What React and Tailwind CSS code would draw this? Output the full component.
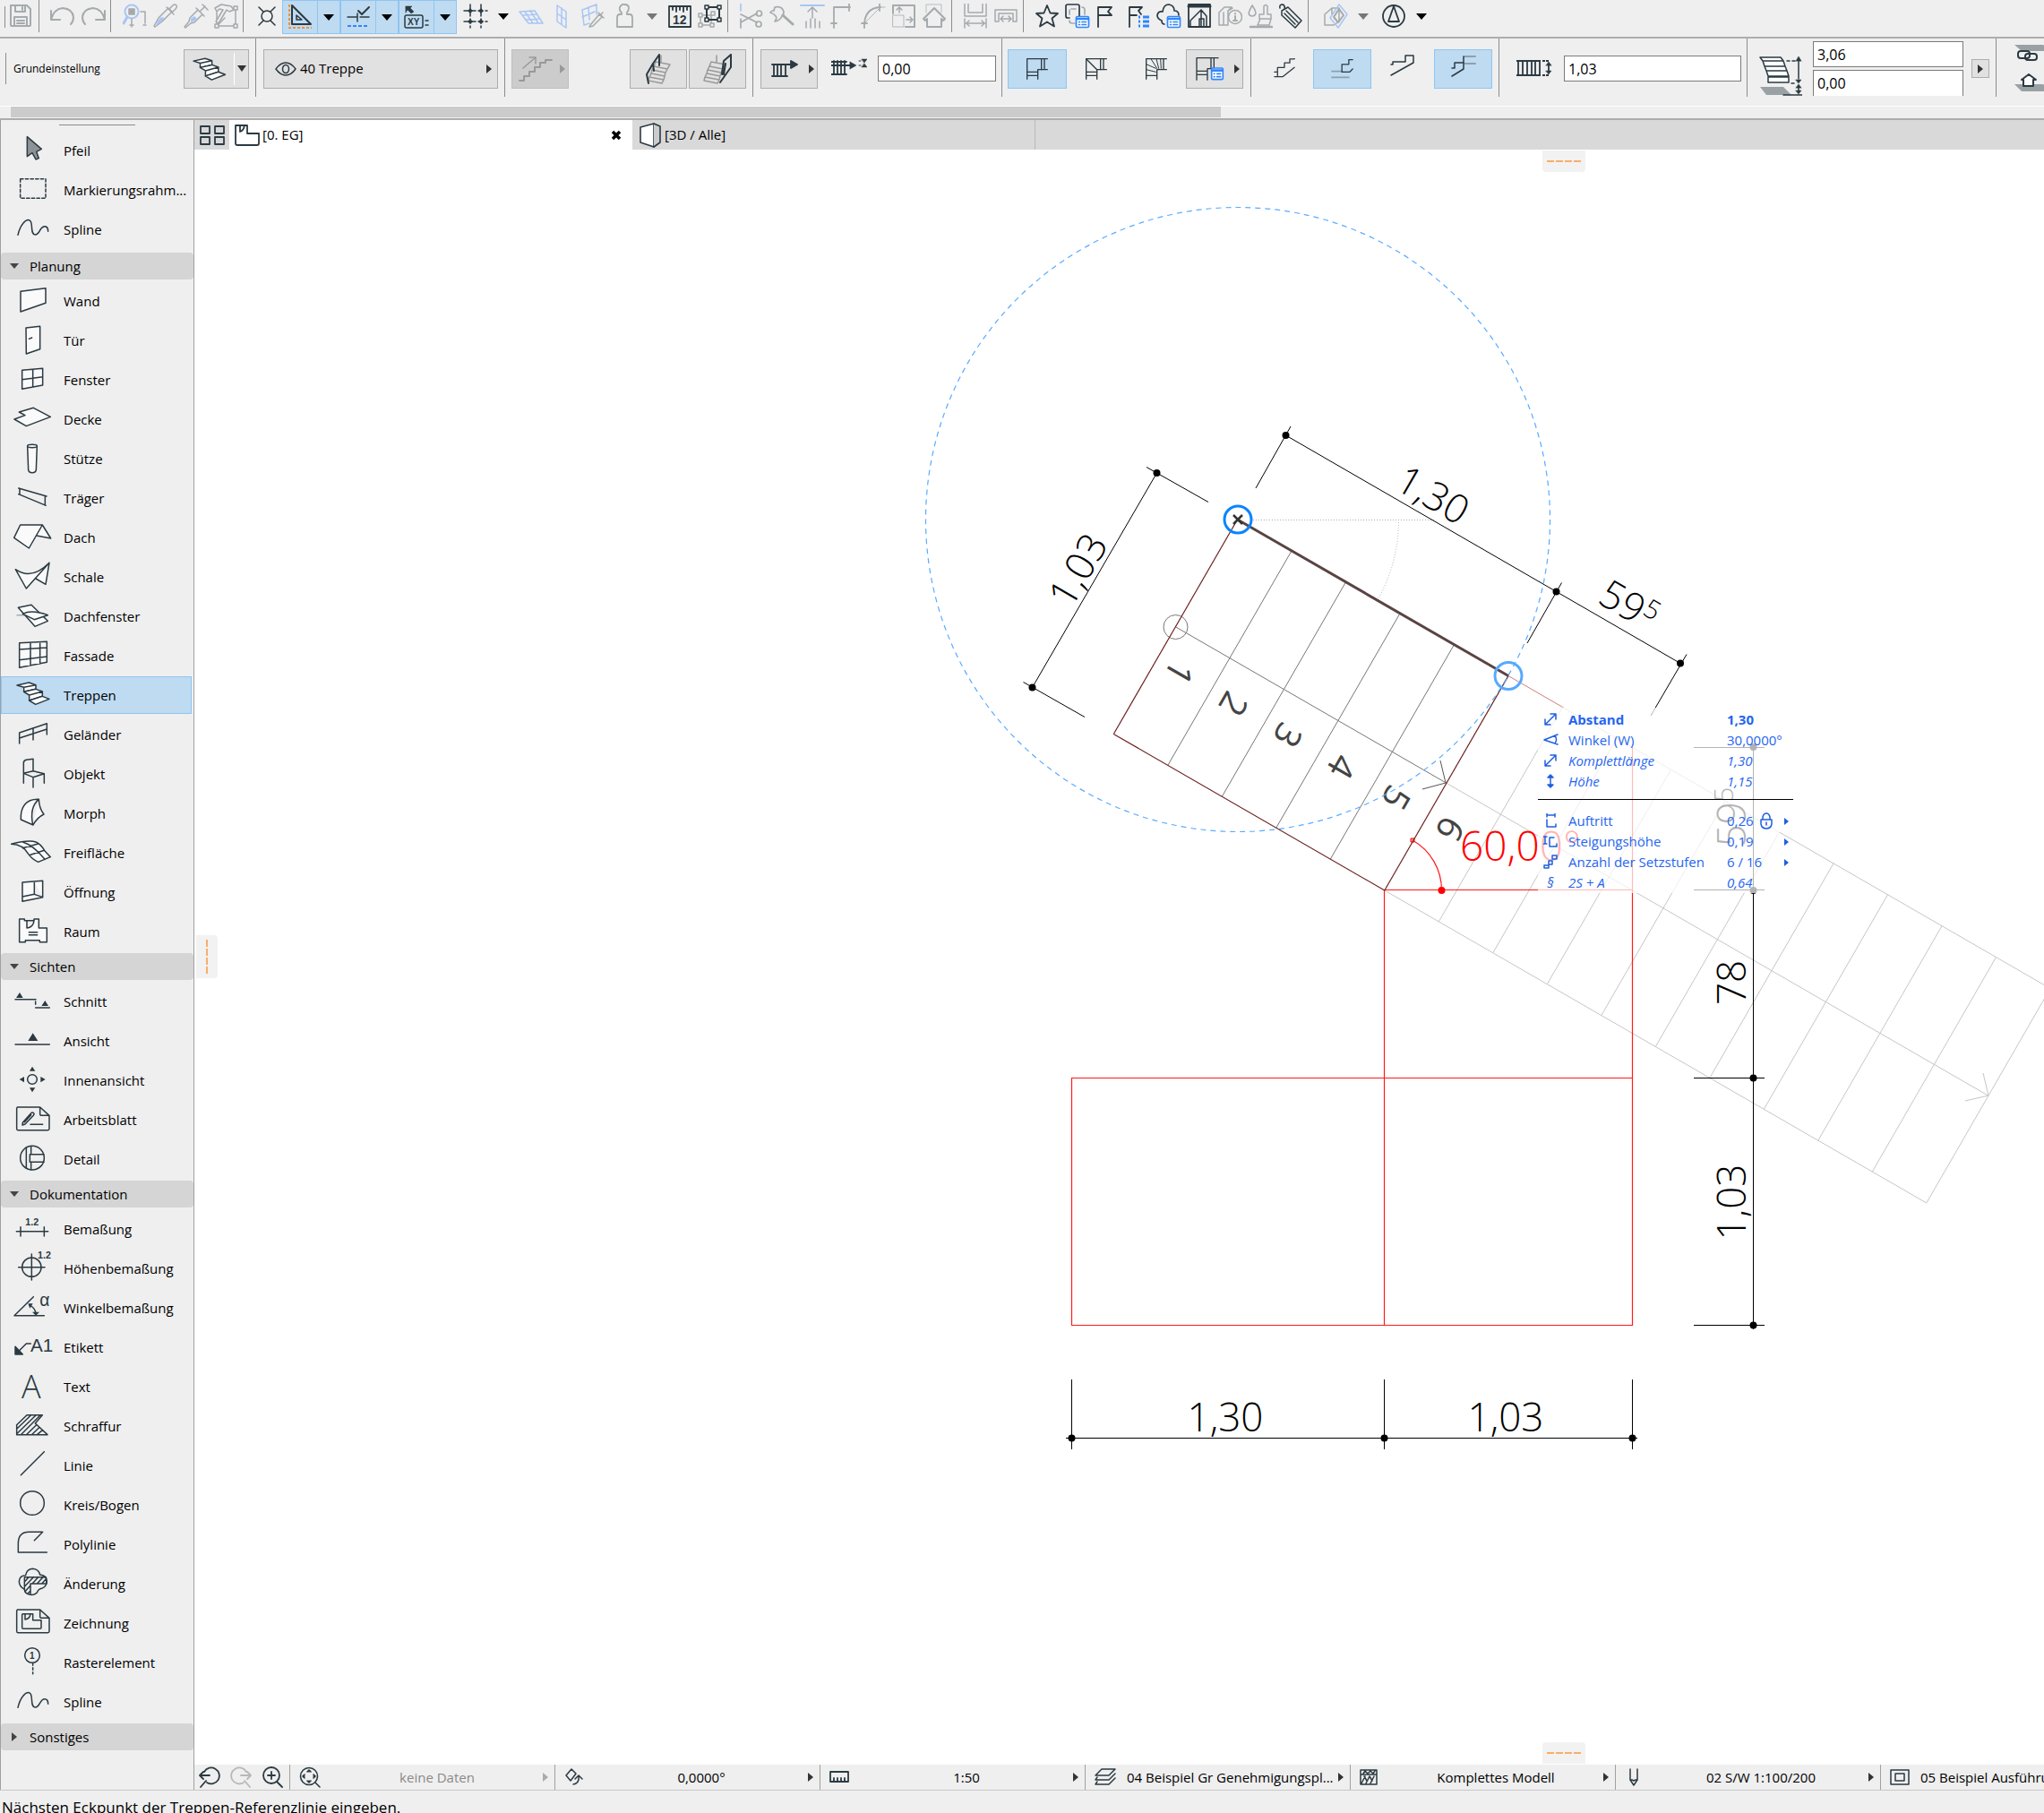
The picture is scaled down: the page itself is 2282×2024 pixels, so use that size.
import clsx from "clsx";

const INK = "#2b3a42";
const PALE = "#a5aaad";
const SOFT_BLUE = "#a8c6f5";
const BLUE = "#2f86ff";

/* ---------- small building blocks ---------- */

function Glyph({ children, color = INK, w = 28, h = 28, box = "0 0 28 28", sw = 1.5 }) {
  return (
    <svg
      width={w}
      height={h}
      viewBox={box}
      fill="none"
      stroke={color}
      strokeWidth={sw}
      strokeLinecap="round"
      strokeLinejoin="round"
      className="shrink-0"
      aria-hidden="true"
    >
      {children}
    </svg>
  );
}

function Tool({ label, className, ...rest }) {
  return (
    <button type="button" aria-label={label} className={clsx("flex h-9 shrink-0 items-center justify-center", className || "w-[34px]")}>
      <Glyph {...rest} />
    </button>
  );
}

function Drop({ pale, className }) {
  return (
    <button type="button" aria-label="Mehr" className={clsx("flex h-9 shrink-0 items-center justify-center", className || "w-7")}>
      <svg width="12" height="8" aria-hidden="true">
        <path d="M0 1H12L6 8Z" fill={pale ? "#777" : "#000"} />
      </svg>
    </button>
  );
}

function Sep({ className }) {
  return <div className={clsx("w-px shrink-0 self-start bg-[#8c8c8c]", className)} />;
}

function Arrow({ color = "#333" }) {
  return (
    <svg width="7" height="12" className="shrink-0" aria-hidden="true">
      <path d="M0 1L6 6L0 11Z" fill={color} />
    </svg>
  );
}

function ListBadge() {
  return (
    <g>
      <rect x="12.5" y="14.5" width="14" height="12" rx="1.5" fill="#fff" stroke={BLUE} />
      <path d="M13 17H26" stroke={BLUE} strokeWidth="2.5" />
      <path d="M15.5 20.5H16.5M19 20.5H23.5M15.5 23.5H16.5M19 23.5H23.5" stroke={BLUE} />
    </g>
  );
}

/* ---------- top toolbar ---------- */

function BluePair({ label, children }) {
  return (
    <div className="flex h-[38px] shrink-0 border border-[#8fc5f0] bg-[#bfdbf1]">
      <Tool label={label} className="w-[38px]">
        {children}
      </Tool>
      <Drop className="w-[25px] border-l border-[#8fc5f0]" />
    </div>
  );
}

function TopBar() {
  return (
    <div className="flex h-[43px] shrink-0 items-start overflow-hidden border-b-2 border-[#adadad] bg-[#efefef]">
      <Sep className="mt-[7px] ml-[5px] h-6" />
      <Tool label="Sichern" color={PALE} sw={2}>
        <path d="M3 2H21L25 6V24Q25 25 24 25H4Q3 25 3 24ZM8 2V9H19V2M16 4V7M7 25V15H21V25M10 19H18M10 22H18" />
      </Tool>
      <Sep className="ml-[3px] mr-[9px] h-9" />
      <Tool label="Widerrufen" color={PALE} sw={2}>
        <path d="M1 8V18H11M1 18Q4 6 14 5Q25 6 26 15Q26 20 23 23" />
      </Tool>
      <Tool label="Wiederholen" color={PALE} sw={2}>
        <path d="M27 8V18H17M27 18Q24 6 14 5Q3 6 2 15Q2 20 5 23" />
      </Tool>
      <Sep className="ml-[2px] mr-[10px] h-9" />
      <Tool label="Suchen" color={PALE}>
        <circle cx="10" cy="9" r="7.5" stroke={SOFT_BLUE} strokeWidth="2" />
        <path d="M5 15L1 22" stroke={SOFT_BLUE} strokeWidth="3" />
        <rect x="7" y="6" width="6" height="6" fill={PALE} />
        <path d="M20 9H25V22M10 17V26M8 24H12M23 24H26" />
      </Tool>
      <Tool label="Parameter aufnehmen" color={PALE}>
        <path d="M6 16L17 5L21 9L10 20L2 26L1 25Z" />
        <path d="M5 19L9 15L13 16L9 20L3 25Z" fill={SOFT_BLUE} stroke="none" />
        <path d="M18 6L22 2Q24 0 26 2Q27 4 25 6L21 10M15 4L23 12" />
      </Tool>
      <Tool label="Parameter übertragen" color={PALE}>
        <path d="M7 16L16 7L21 12L12 21L8 22L2 27M7 16L6 20L1 26M18 9L24 3M21 1L27 7M14 5L23 14" />
        <path d="M8 17L12 14L15 17L11 20L8 21Z" fill={SOFT_BLUE} stroke="none" />
      </Tool>
      <Tool label="Favoriten anwenden" color={PALE}>
        <path d="M3 10V25H24V5M3 25L12 16" />
        <path d="M1 5L8 1L19 3L22 7L17 9L14 7L5 22L2 20L10 7L6 6L3 9Z" fill="#efefef" />
        <path d="M22 3H26V7H22ZM1 23H5V27H1ZM22 23H26V27H22Z" fill="#efefef" />
      </Tool>
      <Sep className="ml-px mr-[9px] h-9" />
      <Tool label="Fangpunkte">
        <circle cx="14" cy="14" r="6" />
        <path d="M5 4L10 9M23 4L18 9M5 24L10 19M23 24L18 19" />
      </Tool>
      <BluePair label="Hilfslinien">
        <path d="M5 1V22H26Z" strokeWidth="2" />
        <path d="M10 12V17H16Z" />
        <path d="M2 0V26H27" stroke="#f0913a" strokeWidth="2" strokeDasharray="3 2" strokeLinecap="butt" />
      </BluePair>
      <BluePair label="Fangen">
        <path d="M2 14H12M16 14H26M13 10V19" />
        <path d="M14 7L18 11L26 3" strokeWidth="2" />
        <path d="M2 24H26" stroke={BLUE} strokeWidth="2" strokeDasharray="4 2" strokeLinecap="butt" />
      </BluePair>
      <BluePair label="Tracker">
        <path d="M2 2H9L7 4L11 8L8 10L4 6L2 9Z" fill={INK} strokeWidth="0.5" />
        <rect x="1" y="12" width="20" height="14" rx="2" />
        <text x="4" y="23" fontSize="10" fontWeight="700" fill={INK} stroke="none" fontFamily="Liberation Sans, sans-serif">XY</text>
        <path d="M24 18H27M24 23H27" />
      </BluePair>
      <Tool label="Raster" className="ml-1 w-[34px]">
        <path d="M8 1V27M20 1V27M1 8H27M1 20H27" strokeDasharray="5 3" />
        <path d="M7 8H9M8 7V9M19 8H21M20 7V9M7 20H9M8 19V21M19 20H21M20 19V21" strokeWidth="3" />
      </Tool>
      <Drop />
      <Tool label="Arbeitsebene" color={SOFT_BLUE}>
        <path d="M1 9L18 8L27 22L11 22ZM4 13L20 12M7 18L23 17M7 9L16 22M13 8L22 22" />
      </Tool>
      <Tool label="Vertikale Ebene" color={SOFT_BLUE}>
        <path d="M9 2L19 9V27L9 20ZM9 11L19 18M14 5V23" />
      </Tool>
      <Tool label="Ebene aufnehmen" color={SOFT_BLUE}>
        <path d="M3 7L19 1V12M3 7L5 24L11 22M3 15L17 9M10 4L11 18" />
        <path d="M12 24L22 12L25 15L15 25L11 26ZM21 10L27 16M24 12L26 10" stroke={PALE} />
      </Tool>
      <Tool label="Nutzer" color={PALE} className="ml-[2px] w-[34px]" sw={1.8}>
        <path d="M11 12V10Q8 8 9 4Q11 0 14 1Q19 1 19 5Q19 8 17 10V12H20Q23 12 23 16V26H6V16Q6 12 9 12Z" />
      </Tool>
      <Drop pale />
      <Tool label="Lineal">
        <path d="M2 3H26V26H2ZM6 3V7M10 3V9M14 3V7M18 3V9M22 3V7" strokeWidth="1.8" />
        <text x="6" y="23" fontSize="14" fontWeight="700" fill={INK} stroke="none" fontFamily="Liberation Sans, sans-serif">12</text>
      </Tool>
      <Tool label="Gruppen">
        <path d="M3 13H15V24H3Z" stroke={PALE} />
        <path d="M10 4H24V18H10Z" strokeWidth="2" />
        <path d="M8 2H12V6H8ZM22 2H26V6H22ZM8 16H12V20H8ZM22 16H26V20H22Z" fill="#efefef" />
        <path d="M1 11H5V15H1ZM1 22H5V26H1ZM14 22H18V26H14ZM15 9H19V13H15Z" stroke={PALE} fill="#efefef" />
      </Tool>
      <Sep className="ml-[2px] mr-[9px] h-9" />

      <Tool label="Trennen" color={PALE} sw={1.7}>
        <path d="M2 0V8" stroke={SOFT_BLUE} />
        <path d="M2 17V27M2 12L20 21M2 21L20 11" />
        <circle cx="22.5" cy="11" r="3" />
        <circle cx="22" cy="23" r="3" />
      </Tool>
      <Tool label="Anpassen" color={PALE} sw={1.7}>
        <path d="M6 4Q14 2 16 9Q16 13 14 14Q12 19 6 20Q9 16 7 14Q5 11 1 10Q3 7 5 8Z" />
        <path d="M15 13L26 23" strokeWidth="3" />
      </Tool>
      <Tool label="Ausdehnen" color={PALE}>
        <path d="M1 2H27" stroke={SOFT_BLUE} strokeWidth="2" />
        <path d="M14 16V5M9 9L14 4L19 9M7 20V27M12 17V27M17 17V27M22 20V27" />
      </Tool>
      <Tool label="Verschneiden" color={PALE}>
        <path d="M4 27V4H22M21 0V8M1 22H7" strokeWidth="1.8" />
      </Tool>
      <Tool label="Abrunden" color={PALE}>
        <path d="M4 27Q3 5 22 4M21 0V8M1 22H7" strokeWidth="1.8" />
        <path d="M4 22L22 4H27" strokeWidth="0.8" />
      </Tool>
      <Tool label="Größe ändern" color={PALE}>
        <path d="M2 11V2H26V26H16" strokeWidth="2" />
        <path d="M2 13H14V26H2Z" strokeWidth="0.8" />
        <path d="M9 10V4M6 7L9 4L12 7M17 18H24M21 15L24 18L21 21" />
      </Tool>
      <Tool label="Haus" color={PALE}>
        <path d="M5 10V1H22V10" strokeWidth="0.7" />
        <path d="M2 17L14 5L26 17L24 19L22 17V26H6V17L4 19Z" strokeWidth="2" />
      </Tool>
      <Sep className="ml-[2px] mr-[9px] h-9" />
      <Tool label="Abstand" color={PALE}>
        <path d="M2 0V14H26V0M6 0V10H22V0M2 17V27M26 17V27M3 22H25M7 19L4 22L7 25M21 19L24 22L21 25" />
      </Tool>
      <Tool label="Breite" color={PALE}>
        <path d="M2 20V7H26V20H22V11H6V20ZM9 17H20M11 14L8 17L11 20M17 14L20 17L17 20" />
      </Tool>
      <Sep className="ml-[2px] mr-[9px] h-9" />
      <Tool label="Favoriten" sw={1.8}>
        <path d="M14 2L17.5 10.5L26 11L19.5 16.5L22 25.5L14 20.5L6 25.5L8.5 16.5L2 11L10.5 10.5Z" />
      </Tool>
      <Tool label="Ebenen" sw={1.7}>
        <path d="M5 16H3Q1 16 1 14V3Q1 1 3 1H14Q16 1 16 3V14" />
        <path d="M7 6H12M5 12V7M19 4Q22 4 22 7V12M5 19Q5 22 8 22H11" stroke={PALE} />
        <ListBadge />
      </Tool>
      <Tool label="Markierung" sw={1.8}>
        <path d="M3 26V4H18L14 9L18 13H3" />
      </Tool>
      <Tool label="Markierungsliste" sw={1.8}>
        <path d="M4 26V4H18L14 8L17 12M4 13H12" />
        <path d="M14 15H16M19 15H26M14 20H16M19 20H26M14 25H16M19 25H26" stroke={BLUE} strokeWidth="3" strokeLinecap="butt" />
      </Tool>
      <Tool label="Änderungen" sw={1.7}>
        <path d="M9 23Q6 23 6 19Q1 17 1 13Q2 8 7 9Q8 1 14 1Q20 2 20 8Q25 8 25 13" />
        <ListBadge />
      </Tool>
      <Tool label="Projekt">
        <path d="M2 1H26V26H2Z" strokeWidth="1.8" />
        <path d="M2 3H26" strokeWidth="3" />
        <path d="M4 25V19L16 7V25M16 7L22 14V25M14 25V17H19V25" />
      </Tool>
      <Tool label="Info" color={PALE}>
        <path d="M2 24V10L8 4H16L12 8V24ZM7 10V24M12 8L17 5" />
        <circle cx="20" cy="15" r="7.5" fill="#efefef" />
        <path d="M20 11V11.5M20 14V19M18 19H22" strokeWidth="2" />
      </Tool>
      <Tool label="Oberflächen" color={PALE}>
        <path d="M5 2Q9 8 9 11Q8 14 5 14Q2 14 1 11Q2 7 5 2ZM18 12V3Q20 0 22 3V12H26V17H13V12ZM14 17L11 24H24L26 17" />
        <path d="M3 26H27" strokeWidth="2.5" />
      </Tool>
      <Tool label="Klassifizierung">
        <path d="M2 5Q1 1 5 1Q8 2 7 6M4 8L11 4L26 19L19 27L4 13ZM9 8L22 21M7 11L19 23" />
      </Tool>
      <Sep className="ml-[2px] mr-[13px] h-9" />
      <Tool label="3D-Schnitt" color={PALE}>
        <path d="M2 12L10 5H18V20L12 24H2ZM10 5V12" />
        <path d="M18 1L27 12L17 27L8 16Z" stroke={SOFT_BLUE} />
        <path d="M18 6L23 13L17 21L12 15Z" strokeWidth="2" />
      </Tool>
      <Drop pale />
      <Tool label="Norden" className="ml-[3px] w-[34px]" sw={1.8}>
        <circle cx="14" cy="14" r="12" />
        <path d="M14 3L20 20H8Z" />
      </Tool>
      <Drop />
    </div>
  );
}

/* ---------- info box ---------- */

const flat = "flex h-11 shrink-0 items-center";
const raised = clsx(flat, "border border-[#adadad] bg-[#e1e1e1]");
const active = clsx(flat, "justify-center border border-[#8fc5f0] bg-[#bfdbf1]");
const field = "h-[29px] shrink-0 border border-[#7a7a7a] bg-white px-1 text-base text-black";

function StairPlan({ children }) {
  return (
    <Glyph w={24} h={24} box="0 0 72 72" sw={4}>
      <path d="M2 2V70M2 58H38M38 70V38H70M2 2H70M60 2V38" />
      {children || <path d="M2 46H38M50 2V38" />}
    </Glyph>
  );
}

function StairGlyph({ w, h }) {
  return (
    <Glyph w={w} h={h} box="12 12 128 96" sw={4.5}>
      {icons.treppe}
    </Glyph>
  );
}

function RailStair({ right }) {
  return (
    <Glyph w={34} h={36} box="0 0 34 36" color="#999">
      <g transform={right ? "translate(-4 0)" : undefined}>
        <path d="M14 10L30 13L27 18L12 15ZM12 15L10 19L25 22L27 18M10 19L9 23L24 26L25 22M9 23L7 27L23 30L24 26M7 27L6 31L21 34L23 30M20 11V3" />
      </g>
      <path d={right ? "M32 2L24 9L22 24M32 2V16L20 33M26 12L24 24" : "M4 24L11 12L18 2V14M4 24L6 34M11 12L12 20"} stroke={INK} strokeWidth="2" />
    </Glyph>
  );
}

function InfoBox() {
  return (
    <div className="h-[91px] shrink-0 overflow-hidden border-b-2 border-[#adadad] bg-[#efefef]">
      <div className="flex h-[67px] items-center">
        <div className="ml-[6px] h-[35px] w-px shrink-0 bg-[#8c8c8c]" />
        <div className="ml-2 w-[190px] shrink-0 text-xs">Grundeinstellung</div>
        <button type="button" aria-label="Treppe" className={clsx(raised, "w-[73px]")}>
          <span className="flex w-[57px] justify-center">
            <StairGlyph w={42} h={32} />
          </span>
          <span className="flex h-9 w-4 items-center justify-center border-l border-white">
            <svg width="10" height="7" aria-hidden="true">
              <path d="M0 0H10L5 7Z" fill="#333" />
            </svg>
          </span>
        </button>
        <Sep className="mr-2 ml-[7px] h-[65px]" />
        <button type="button" className={clsx(raised, "w-[262px] gap-1 pr-[5px] pl-3 text-[15px]")}>
          <Glyph w={24} h={16} box="0 0 24 16">
            <path d="M1 8Q6 1 12 1Q18 1 23 8Q18 15 12 15Q6 15 1 8Z" />
            <ellipse cx="12" cy="8" rx="3.5" ry="4.5" />
          </Glyph>
          <span className="grow text-left">40 Treppe</span>
          <Arrow />
        </button>
        <Sep className="mx-[7px] h-[65px]" />
        <button type="button" disabled aria-label="Aufwärts" className={clsx(flat, "w-16 justify-end gap-2 border border-[#bfbfbf] bg-[#cccccc] pr-[2px]")}>
          <Glyph w={38} h={30} box="0 0 38 30" color="#999">
            <path d="M1 28H6V23H12V18H18V13H24V8H30V5H37" strokeWidth="2" />
            <path d="M5 14L19 2M12 2H19V9" />
          </Glyph>
          <Arrow color="#999" />
        </button>
        <button type="button" aria-label="Geländer links" className={clsx(raised, "ml-[68px] w-16 justify-center")}>
          <RailStair />
        </button>
        <button type="button" aria-label="Geländer rechts" className={clsx(raised, "ml-[2px] w-16 justify-center")}>
          <RailStair right />
        </button>
        <Sep className="mr-2 ml-[7px] h-[65px]" />
        <button type="button" aria-label="Referenzlinie" className={clsx(raised, "w-16 justify-end gap-3 pr-[2px]")}>
          <Glyph w={30} h={20} box="0 0 30 20" sw={1.8}>
            <path d="M1 5H28M1 18H18M3 5V18M7 5V18M11 5V18M16 5V18" />
            <path d="M22 1L29 5L22 9Z" fill={INK} />
          </Glyph>
          <Arrow />
        </button>
        <label className="flex shrink-0 items-center">
          <span className="ml-[15px]">
            <Glyph w={40} h={24} box="0 0 40 24" sw={1.8}>
              <path d="M0 4H17M0 8H22M0 18H17M3 3V18M7 3V18M11 3V18M15 3V18" />
              <path d="M31 3H33M31 8H33" strokeWidth="1" />
              <path d="M21 4L28 8L21 12ZM34 1H40L37 5ZM37 6L40 10H34Z" fill={INK} strokeWidth="0.5" />
            </Glyph>
          </span>
          <input aria-label="Versatz" defaultValue="0,00" className={clsx(field, "ml-3 w-[132px]")} />
        </label>
        <Sep className="mx-[6px] h-[65px]" />
        <button type="button" aria-label="Podest" className={clsx(active, "w-[66px]")}>
          <StairPlan />
        </button>
        <button type="button" aria-label="Zweigeteiltes Podest" className={clsx(flat, "w-[66px] justify-center")}>
          <StairPlan>
            <path d="M2 2L38 38M2 46H38M50 2V38" />
          </StairPlan>
        </button>
        <button type="button" aria-label="Wendelstufen" className={clsx(flat, "w-[67px] justify-center")}>
          <StairPlan>
            <path d="M34 34L2 20M34 46L2 38M38 34L18 2M44 34L36 2M52 34L50 2" strokeWidth="3" />
          </StairPlan>
        </button>
        <button type="button" aria-label="Wendungstyp" className={clsx(raised, "w-16 justify-end gap-[11px] pr-[2px]")}>
          <Glyph w={32} h={26} box="0 0 94 78" sw={4}>
            <path d="M2 2V76M2 46H38M2 58H38M38 76V38H74M2 2H74M50 2V38M60 2V38" />
            <rect x="52" y="36" width="38" height="38" rx="4" fill="#fff" stroke={BLUE} strokeWidth="5" />
            <path d="M54 44H88" stroke={BLUE} strokeWidth="8" />
            <path d="M60 55H62M70 55H82M60 65H62M70 65H82" stroke={BLUE} strokeWidth="5" />
          </Glyph>
          <Arrow />
        </button>
        <Sep className="mr-1 ml-2 h-[65px]" />
        <button type="button" aria-label="Start mit Setzstufe" className={clsx(flat, "w-[65px] justify-center")}>
          <Glyph w={28} h={24}>
            <path d="M1 18H5V12H14V6H21V1H27V0M1 24H12L27 12M5 18V24" />
          </Glyph>
        </button>
        <button type="button" aria-label="Start mit Auftritt" className={clsx(active, "w-[65px]")}>
          <Glyph w={28} h={24}>
            <path d="M0 17H13M0 25H22" stroke="#8fa0ac" strokeWidth="2" />
            <path d="M27 2H22V8H13V18H23L27 14" />
          </Glyph>
        </button>
        <button type="button" aria-label="Ende mit Setzstufe" className={clsx(flat, "w-[70px] justify-center")}>
          <Glyph w={28} h={34} box="0 0 28 34">
            <path d="M1 12H3V9H17V2H26V10L1 24" />
          </Glyph>
        </button>
        <button type="button" aria-label="Ende mit Auftritt" className={clsx(active, "w-[65px]")}>
          <Glyph w={28} h={34} box="0 0 28 34">
            <path d="M15 3H27M15 11H27" stroke="#8fa0ac" strokeWidth="2" />
            <path d="M1 16H4V10H14V3V17L1 25" />
          </Glyph>
        </button>
        <Sep className="mr-[19px] ml-[7px] h-[65px]" />
        <label className="flex shrink-0 items-center">
          <Glyph w={40} h={22} box="0 0 40 22" sw={1.8}>
            <path d="M0 2H27M0 18H27M2 2V18M7 2V18M12 2V18M17 2V18M21 2V18M26 2V18M36 6V14" strokeLinecap="butt" />
            <path d="M29 2H36M29 18H36" strokeDasharray="3 1" strokeLinecap="butt" />
            <path d="M33 7L36 3L39 7ZM33 13H39L36 17Z" fill={INK} strokeWidth="0.5" />
          </Glyph>
          <input aria-label="Treppenbreite" defaultValue="1,03" className={clsx(field, "ml-[13px] w-[198px]")} />
        </label>
        <Sep className="mr-[13px] ml-[6px] h-[65px]" />
        <span className="shrink-0 pt-4">
          <Glyph w={48} h={46} box="0 0 48 46">
            <path d="M1 35H27L36 44H8Z" fill="#9aa1a5" stroke="none" />
            <g fill="#fff">
              <path d="M1 2H24L27 6H4ZM4 6H27L29 12H6ZM6 12H29L31 17H8ZM8 17H31L33 23H10ZM10 24H33V30H10Z" />
            </g>
            <path d="M27 44H48M44 6V26M44 35V40" />
            <path d="M31 6H40M36 31H41" strokeDasharray="3 3" />
            <path d="M41 6L44 1L47 6ZM41 27H47L44 31ZM41 36L44 32L47 36ZM41 39H47L44 43Z" fill={INK} strokeWidth="0.5" />
          </Glyph>
        </span>
        <div className="ml-3 flex h-[61px] w-[168px] shrink-0 flex-col gap-[3px] overflow-hidden">
          <input aria-label="Treppenhöhe" defaultValue="3,06" className={field} />
          <input aria-label="Höhe über Geschoss" defaultValue="0,00" className={clsx(field, "border-b-0")} />
        </div>
        <button type="button" aria-label="Geschoss" className="ml-[9px] flex h-[21px] w-5 shrink-0 items-center justify-center border border-[#adadad] bg-[#e1e1e1]">
          <Arrow />
        </button>
        <Sep className="mr-5 ml-[7px] h-[65px]" />
        <Glyph w={44} h={56} box="0 0 44 56" sw={2}>
          <path d="M0 1H32L42 8H8ZM0 45H32L42 53H8Z" fill="#9aa1a5" stroke="none" />
          <rect x="4" y="8" width="13" height="8" rx="3" />
          <rect x="12" y="11" width="13" height="7" rx="3" />
          <path d="M10 47V40H8L16 34L24 40H21V47Z" fill="#fff" />
        </Glyph>
      </div>
      <div className="mt-2 border-t border-white">
        <div className="ml-3 h-3 w-[1351px] bg-[#cbcbcb]" />
      </div>
    </div>
  );
}

/* ---------- toolbox ---------- */

const small = { fill: INK, stroke: "none", fontFamily: "Liberation Sans, sans-serif" };

const icons = {
  pfeil: <path d="M55 20V86L72 74L84 96L94 92L86 70L103 61Z" fill="#8d9396" />,
  rahmen: <rect x="32" y="29" width="85" height="65" strokeDasharray="10 7" />,
  spline: <path d="M24 85C32 50 50 32 62 35C78 40 62 82 82 84C99 84 96 56 114 56C124 56 125 66 125 73" />,
  wand: <path d="M33 34L117 23V73L33 102Z" fill="#fafafa" />,
  tuer: <path d="M51 24L98 19V95L52 111ZM61 61L71 57" fill="#fafafa" />,
  fenster: <path d="M38 34L107 28V84L38 97ZM74 31V90M38 65L107 56" fill="#fafafa" />,
  decke: <path d="M28 42L76 28L133 58L52 89L12 66L48 53Z" fill="#fafafa" />,
  stuetze: (
    <g fill="#fafafa">
      <path d="M56 24L59 104Q60 113 72 113Q84 113 85 104L88 24" />
      <ellipse cx="72" cy="24" rx="16" ry="5" />
    </g>
  ),
  traeger: <path d="M26 33L120 60M26 53L118 91M30 34V54M115 60V90" />,
  dach: <path d="M32 24H106L61 102L11 67ZM106 24L134 69L87 60" fill="#fafafa" />,
  schale: <path d="M16 41Q70 79 129 19L52 105ZM129 19L117 91L84 72" fill="#fafafa" />,
  dachfenster: (
    <g>
      <path d="M25 37L69 28L124 82L81 100Z" fill="#fafafa" />
      <path d="M21 62H45" stroke={PALE} />
      <path d="M40 58Q70 42 124 62L79 77Z" fill="#fafafa" />
    </g>
  ),
  fassade: <path d="M29 23L121 19V88L29 106ZM66 22V99M98 20V93M29 45L121 39M29 80L121 69" fill="#fafafa" />,
  treppe: (
    <g fill="#fff">
      <path d="M21 33L61 24L84 32L44 40ZM44 40L84 32V46L44 55Z" />
      <path d="M44 55L84 46L106 54L62 66ZM62 66L106 54V70L62 84Z" />
      <path d="M62 84L106 70L129 79L83 97Z" />
    </g>
  ),
  gelaender: <path d="M29 96V60L121 29V66M29 78L121 48M75 44V84" />,
  objekt: <path d="M43 97V29Q43 21 52 19L75 16V57M43 64L75 56L112 65L75 77ZM112 65V97M75 77V111" />,
  morph: <path d="M34 87C32 45 50 17 94 19Q95 50 111 69Q88 80 75 105ZM94 19Q62 45 74 105" fill="#fafafa" />,
  frei: <path d="M2 37Q60 22 84 30Q100 36 114 60L133 80L92 97Q72 88 59 70Q40 38 2 37ZM42 31Q74 40 114 88M40 50L92 36M62 74L112 58" fill="#fafafa" />,
  oeffnung: <path d="M39 33L107 28V83L39 97ZM79 30V73L107 83M79 73L39 81" fill="#fafafa" />,
  raum: <path d="M29 24H46V29H78V24H94V54H121V101H97V95H49V101H29ZM54 29V54Q76 52 78 29M61 68H89M61 77H89" fill="#fafafa" />,
  schnitt: (
    <g>
      <path d="M15 59H84M83 66V76M83 87H130" />
      <path d="M18 54L30 36L41 54ZM103 81L115 63L126 81Z" fill={INK} stroke="none" />
    </g>
  ),
  ansicht: (
    <g>
      <path d="M15 78H130" />
      <path d="M58 66L74 40L91 66Z" fill={INK} stroke="none" />
    </g>
  ),
  innen: (
    <g>
      <circle cx="72" cy="63" r="16" />
      <path d="M63 35L72 20L82 35ZM63 91H82L72 106ZM29 63L45 54V73ZM100 54L116 63L100 73Z" fill={INK} stroke="none" />
    </g>
  ),
  arbeitsblatt: <path d="M22 24H98L129 52V96Q129 101 124 101H24Q20 101 20 96V28ZM98 24V47Q98 52 104 52H129M40 76L68 44Q72 40 77 44Q80 48 76 52L48 81L39 84ZM46 74L68 50M66 82H107" />,
  detail: (
    <g>
      <circle cx="72" cy="62" r="40" />
      <path d="M52 27V97M68 23V50M68 76V101M111 50H64V76H111" />
    </g>
  ),
  bemassung: (
    <g>
      <path d="M19 74H125M33 59V90M112 59V90" />
      <text x="49" y="53" fontSize="32" fontWeight="700" {...small}>1.2</text>
    </g>
  ),
  hoehe: (
    <g>
      <circle cx="70" cy="62" r="32" />
      <path d="M26 62H114M70 18V105" />
      <text x="90" y="32" fontSize="32" fontWeight="700" {...small}>1.2</text>
    </g>
  ),
  winkel: (
    <g>
      <path d="M76 29L12 92H112M64 58Q80 64 84 84" />
      <path d="M58 52L74 52L64 68ZM72 80H96L84 92Z" fill={INK} stroke="none" />
      <text x="97" y="59" fontSize="58" {...small}>α</text>
    </g>
  ),
  etikett: (
    <g>
      <path d="M24 82L52 54H67" />
      <path d="M15 64V90H40Z" fill={INK} />
      <text x="66" y="80" fontSize="62" {...small}>A1</text>
    </g>
  ),
  text: <text x="36" y="104" fontSize="108" {...small} fontFamily="Open Sans, sans-serif" fontWeight="300">A</text>,
  schraffur: <path d="M20 62L54 29H106L82 57L123 95H20ZM20 76L68 29M20 92L84 30M34 95L98 31M52 95L86 62M70 95L95 71M88 95L106 80" />,
  linie: <path d="M34 98L112 20" />,
  kreis: <circle cx="72" cy="60" r="40" />,
  polylinie: <path d="M121 93H25V64Q25 25 61 25H107L79 53" />,
  aenderung: (
    <g>
      <path d="M46 85Q28 76 28 58Q30 38 50 38Q54 16 74 16Q94 18 98 36Q120 38 121 58Q120 76 104 82Q92 84 88 96Q78 106 62 102Q48 100 46 85Z" />
      <path d="M46 44H118L120 66H66V102M46 44V86M46 60L60 44M46 76L76 44M48 92L66 72M56 100L66 90M72 66L92 44M88 66L108 44M104 66L118 50" />
    </g>
  ),
  zeichnung: <path d="M22 21H98L129 49V93Q129 98 124 98H24Q20 98 20 93V25ZM98 21V44Q98 49 104 49H129M40 35H74V56H102V82Q102 85 98 85H42Q38 85 38 82V38ZM48 35V54Q64 52 66 35" />,
  raster: (
    <g>
      <circle cx="72" cy="42" r="25" />
      <path d="M74 68V104" strokeDasharray="8 7" />
      <text x="63" y="53" fontSize="30" fontWeight="700" {...small}>1</text>
    </g>
  ),
};

const topTools = [
  ["Pfeil", "pfeil"],
  ["Markierungsrahm...", "rahmen"],
  ["Spline", "spline"],
];

const groups = [
  {
    name: "Planung",
    tools: [
      ["Wand", "wand"],
      ["Tür", "tuer"],
      ["Fenster", "fenster"],
      ["Decke", "decke"],
      ["Stütze", "stuetze"],
      ["Träger", "traeger"],
      ["Dach", "dach"],
      ["Schale", "schale"],
      ["Dachfenster", "dachfenster"],
      ["Fassade", "fassade"],
      ["Treppen", "treppe"],
      ["Geländer", "gelaender"],
      ["Objekt", "objekt"],
      ["Morph", "morph"],
      ["Freifläche", "frei"],
      ["Öffnung", "oeffnung"],
      ["Raum", "raum"],
    ],
  },
  {
    name: "Sichten",
    tools: [
      ["Schnitt", "schnitt"],
      ["Ansicht", "ansicht"],
      ["Innenansicht", "innen"],
      ["Arbeitsblatt", "arbeitsblatt"],
      ["Detail", "detail"],
    ],
  },
  {
    name: "Dokumentation",
    tools: [
      ["Bemaßung", "bemassung"],
      ["Höhenbemaßung", "hoehe"],
      ["Winkelbemaßung", "winkel"],
      ["Etikett", "etikett"],
      ["Text", "text"],
      ["Schraffur", "schraffur"],
      ["Linie", "linie"],
      ["Kreis/Bogen", "kreis"],
      ["Polylinie", "polylinie"],
      ["Änderung", "aenderung"],
      ["Zeichnung", "zeichnung"],
      ["Rasterelement", "raster"],
      ["Spline", "spline"],
    ],
  },
  { name: "Sonstiges", closed: true, tools: [] },
];

function ToolRow({ name, icon }) {
  const on = name === "Treppen";
  return (
    <li className="py-px pr-[2px]">
      <button
        type="button"
        className={clsx(
          "flex h-[42px] w-full items-center border pl-[10px] text-left whitespace-nowrap",
          on ? "border-[#8fc5f0] bg-[#bfdbf1]" : "border-transparent"
        )}
      >
        <Glyph w={48} h={44} box="0 0 144 132" sw={4.5}>
          {icons[icon]}
        </Glyph>
        <span className="ml-[11px]">{name}</span>
      </button>
    </li>
  );
}

function Toolbox() {
  return (
    <aside className="w-[217px] shrink-0 overflow-hidden border-x border-[#a0a0a0] bg-[#efefef] text-[15px]">
      <div className="flex h-3 justify-center">
        <div className="mt-[5px] h-px w-[85px] bg-[#8c8c8c]" />
      </div>
      <ul className="pb-[2px]">
        {topTools.map(([name, icon]) => (
          <ToolRow key={name} name={name} icon={icon} />
        ))}
      </ul>
      {groups.map((g) => (
        <section key={g.name}>
          <button type="button" className="my-[2px] flex h-[30px] w-full items-center rounded-sm bg-[#d5d5d5] pl-[10px]">
            <span className="flex w-[22px]">
              {g.closed ? (
                <span className="pl-[2px]">
                  <Arrow color="#444" />
                </span>
              ) : (
                <svg width="10" height="6" aria-hidden="true">
                  <path d="M0 0H10L5 6Z" fill="#444" />
                </svg>
              )}
            </span>
            {g.name}
          </button>
          <ul>
            {g.tools.map(([name, icon]) => (
              <ToolRow key={name} name={name} icon={icon} />
            ))}
          </ul>
        </section>
      ))}
    </aside>
  );
}

/* ---------- tabs ---------- */

function Tabs() {
  return (
    <div className="flex h-[33px] shrink-0 items-center bg-[#d9d9d9] text-[15px]">
      <button type="button" aria-label="Übersicht" className="flex h-full w-[39px] items-center justify-center">
        <Glyph w={28} h={24} box="0 0 28 24" sw={1.8}>
          <path d="M1 2H11V10H1ZM17 2H27V10H17ZM1 14H11V22H1ZM17 14H27V22H17Z" />
        </Glyph>
      </button>
      <div className="flex h-full w-[450px] items-center bg-white pr-3 pl-[6px]">
        <Glyph w={28} h={24} box="0 0 28 24" sw={1.8}>
          <path d="M1 1H14V10H27V21Q27 23 25 23H3Q1 23 1 21ZM6 1V8Q10 7 11 1" />
        </Glyph>
        <span className="ml-[3px] grow">[0. EG]</span>
        <button type="button" aria-label="Schließen" className="w-3">
          <svg width="12" height="12" aria-hidden="true">
            <path d="M2 2L10 10M10 2L2 10" stroke="#000" strokeWidth="3.5" />
          </svg>
        </button>
      </div>
      <div className="flex h-full w-[450px] items-center border-r border-[#b8b8b8] pl-2">
        <Glyph w={24} h={28} box="0 0 24 28" sw={1.6}>
          <path d="M1 5L16 1V27L1 22Z" fill="#fff" />
          <path d="M16 1L23 4V22L16 27" fill="#c9cccd" />
        </Glyph>
        <span className="ml-1">[3D / Alle]</span>
      </div>
    </div>
  );
}

/* ---------- plan drawing ---------- */

// one tread is 0,26 m; the run falls by 30 degrees
const STEP = { x: 60.5, y: 34.9 };
const START = { x: 1381.5, y: 580 };
const WIDTH = { x: -138.2, y: 239.5 };

function at(k, across = 0) {
  return [START.x + STEP.x * k + WIDTH.x * across, START.y + STEP.y * k + WIDTH.y * across];
}

function Seg({ a, b, ...rest }) {
  return <line x1={a[0]} y1={a[1]} x2={b[0]} y2={b[1]} {...rest} />;
}

function Dim({ x, y, turn = 0, sup, children }) {
  return (
    <text transform={`translate(${x} ${y}) rotate(${turn})`} textAnchor="middle" fontSize="44" fontWeight="300">
      {children}
      {sup && (
        <tspan fontSize="29" dy="-14">
          {sup}
        </tspan>
      )}
    </text>
  );
}

function Plan() {
  return (
    <svg className="h-full w-full" fill="none" fontFamily="Open Sans, sans-serif">
      <g transform="translate(-217 -167)">
        {/* rest of the flight, not placed yet */}
        <g stroke="#c6c6c6">
          {[6, 7, 8, 9, 10, 11, 12, 13, 14, 15].map((k) => (
            <Seg key={k} a={at(k)} b={at(k, 1)} />
          ))}
          <Seg a={at(5, 1)} b={at(15, 1)} />
          <Seg a={at(5, 0.5)} b={at(15, 0.5)} />
          <Seg a={at(6)} b={at(15)} />
          <path d="M2214 1198L2220 1223L2194 1229" />
        </g>
        <Seg a={at(5)} b={at(6)} stroke="#cc7f7f" />

        {/* red layout lines */}
        <g stroke="#ff1a1a" strokeWidth="1.2">
          <path d="M1545.5 994V1479.5M1196.5 1203.5H1822.5V1479.5H1196.5ZM1822.5 1203.5V834M1545 993.5H1822" />
          <path d="M1609.5 994A64 64 0 0 0 1577 938" />
        </g>
        <circle cx="1609.5" cy="994" r="4" fill="red" />
        <path d="M1575 936H1579V940H1575Z" stroke="red" fill="#ff9999" />
        <text x="1630" y="961" fontSize="46" fontWeight="300" fill="red">60,00°</text>

        {/* current flight */}
        <g stroke="#777">
          {[1, 2, 3, 4].map((k) => (
            <Seg key={k} a={at(k)} b={at(k, 1)} />
          ))}
          <Seg a={at(0, 0.5)} b={at(5, 0.5)} />
          <circle cx="1312.5" cy="700" r="13.5" />
          <path d="M1608 849L1614 874L1588 881" stroke="#555" />
        </g>
        <g stroke="#6b2020" strokeWidth="1.2">
          <Seg a={at(0)} b={at(0, 1)} />
          <Seg a={at(0, 1)} b={at(5, 1)} />
          <Seg a={at(5)} b={at(5, 1)} />
        </g>
        <Seg a={at(0)} b={at(5)} stroke="#5a4343" strokeWidth="3" />
        <g fill="#444" fontSize="40" textAnchor="middle">
          {[1, 2, 3, 4, 5, 6].map((n) => (
            <text key={n} transform={`translate(${1256 + STEP.x * n} ${716 + STEP.y * n}) rotate(120)`} dy="14">
              {n}
            </text>
          ))}
        </g>

        {/* tracking circle and reference points */}
        <circle cx="1382" cy="580" r="348.5" stroke="#5aabff" strokeWidth="1.2" strokeDasharray="6 5" />
        <path d="M1396 580.5H1603M1561.5 580A180 180 0 0 1 1539 668" stroke="#b0b0b0" strokeDasharray="1 2" />
        <circle cx="1382" cy="580" r="15" stroke="#0a84ff" strokeWidth="3" />
        <path d="M1377 575L1387 585M1387 575L1377 585" stroke="#333" strokeWidth="2.5" />
        <circle cx="1684" cy="754.5" r="15" stroke="#55a9ff" strokeWidth="3" />

        {/* dimensions */}
        <g stroke="#000">
          <path d="M1435.5 486L1876 740.5M1402 545L1441 476M1705 718L1743.5 650.5M1843 799L1883 730.5" />
          <path d="M1291.5 528L1152.5 767.5M1280 521.5L1349 560.5M1142.5 761.5L1211 800.5" />
          <path d="M1957.5 834V1484M1891 834.5H1970M1891 993.5H1970M1891 1203.5H1970M1891 1479.5H1970" />
          <path d="M1190 1605.5H1828M1196.5 1540V1618M1545.5 1540V1618M1822.5 1540V1618" />
        </g>
        <g fill="#000">
          {[
            [1435.5, 486],
            [1737.5, 660.5],
            [1876, 740.5],
            [1291.5, 528],
            [1152.5, 767.5],
            [1957.5, 834],
            [1957.5, 994],
            [1957.5, 1203.5],
            [1957.5, 1479.5],
            [1196.5, 1605.5],
            [1545.5, 1605.5],
            [1822.5, 1605.5],
          ].map(([cx, cy]) => (
            <circle key={`${cx}-${cy}`} cx={cx} cy={cy} r="4" />
          ))}
          <Dim x={1592} y={566} turn={30}>1,30</Dim>
          <Dim x={1811} y={689} turn={30} sup="5">59</Dim>
          <Dim x={1217} y={644} turn={-60}>1,03</Dim>
          <Dim x={1949} y={912} turn={-90} sup="5">59</Dim>
          <Dim x={1949} y={1097} turn={-90}>78</Dim>
          <Dim x={1949} y={1342} turn={-90}>1,03</Dim>
          <Dim x={1368} y={1598}>1,30</Dim>
          <Dim x={1681} y={1598}>1,03</Dim>
        </g>
      </g>
    </svg>
  );
}

/* ---------- tracker ---------- */

const length = <path d="M2 14L14 2M8 2H14V8M2 8V14H8" />;
const tracker = [
  { name: "Abstand", value: "1,30", look: "font-bold", icon: length },
  { name: "Winkel (W)", value: "30,0000°", icon: <path d="M16 2L1 8L16 13M13 3Q16 8 13 12" /> },
  { name: "Komplettlänge", value: "1,30", look: "italic", icon: length },
  { name: "Höhe", value: "1,15", look: "italic", icon: <path d="M8 2V14M5 4L8 1L11 4ZM5 12H11L8 15Z" fill="#1f5fe0" /> },
  { name: "Auftritt", value: "0,26", more: true, lock: true, icon: <path d="M4 2H13M4 7V15H14V12M4 0V4M13 0V4" /> },
  { name: "Steigungshöhe", value: "0,19", more: true, icon: <path d="M2 3V11M0 3H4M0 11H4M7 4V14H15V11M7 4H12" /> },
  { name: "Anzahl der Setzstufen", value: "6 / 16", more: true, icon: <path d="M1 12H6V15H1ZM6 7H10V11H6ZM10 1H15V5H10Z" /> },
  { name: "2S + A", value: "0,64", look: "italic", icon: <text x="4" y="14" fontSize="16" fill="#1f5fe0" stroke="none" fontFamily="Open Sans, sans-serif">§</text> },
];

function TrackerTable({ rows }) {
  return (
    <table className="relative w-full table-fixed border-collapse text-[15px] leading-[23px] text-[#2565f0]">
      <colgroup>
        <col className="w-[34px]" />
        <col className="w-[177px]" />
        <col className="w-9" />
        <col className="w-7" />
        <col />
      </colgroup>
      <tbody>
        {rows.map((row) => (
          <tr key={row.name} className={clsx("h-[23px]", row.look)}>
            <td className="p-0 pl-[6px]">
              <Glyph w={17} h={17} box="0 0 17 17" color="#1f5fe0">
                {row.icon}
              </Glyph>
            </td>
            <th scope="row" className={clsx("p-0 text-left whitespace-nowrap", row.look === "font-bold" ? "font-bold" : "font-normal")}>
              {row.name}
            </th>
            <td className="p-0 whitespace-nowrap">{row.value}</td>
            <td className="p-0">
              {row.lock && (
                <Glyph w={16} h={20} box="0 0 16 20" color="#1f5fe0">
                  <path d="M2 8H14V13Q13 18 8 18Q3 18 2 13ZM4 8V5Q5 1 8 1Q11 1 12 5V8M8 11V14" />
                </Glyph>
              )}
            </td>
            <td className="p-0">
              {row.more && (
                <svg width="5" height="8" aria-hidden="true">
                  <path d="M0 0L5 4L0 8Z" fill="#1f5fe0" />
                </svg>
              )}
            </td>
          </tr>
        ))}
      </tbody>
    </table>
  );
}

function Tracker() {
  return (
    <div className="absolute top-[623px] left-[1500px] w-[285px] pt-[2px]">
      <div className="absolute top-0 left-0 h-[207px] w-[270px] bg-white/70" />
      <TrackerTable rows={tracker.slice(0, 4)} />
      <div className="relative mt-2 mb-3 h-px bg-black" />
      <TrackerTable rows={tracker.slice(4)} />
    </div>
  );
}

function Grip({ tall, className }) {
  return (
    <div className={clsx("absolute flex items-center justify-center bg-[#f2f2f2]", tall ? "h-12 w-6" : "h-6 w-12", className)}>
      <svg width={tall ? 2 : 38} height={tall ? 38 : 2} aria-hidden="true">
        <path d={tall ? "M1 0V38" : "M0 1H38"} stroke="#f9ae6a" strokeWidth="2" strokeDasharray="8 2" />
      </svg>
    </div>
  );
}

/* ---------- bottom bar ---------- */

function Quick({ label, icon, children, pale, left, open }) {
  return (
    <button
      type="button"
      aria-label={label}
      className={clsx(
        "flex h-full w-[296px] shrink-0 items-center border-l border-[#a0a0a0] pr-[6px] pl-[10px] whitespace-nowrap",
        pale && "text-[#8a8a8a]"
      )}
    >
      {icon}
      <span className={clsx("grow pl-3", left ? "text-left" : "text-center")}>{children}</span>
      {!open && <Arrow color={pale ? "#aaa" : "#333"} />}
    </button>
  );
}

function QuickBar() {
  return (
    <div className="flex h-7 shrink-0 items-center overflow-hidden bg-[#efefef] text-[15px]">
      <div className="flex w-[106px] shrink-0 items-center gap-[11px] pl-[5px]">
        <button type="button" aria-label="Zoom zurück">
          <Glyph w={24} h={24} box="0 0 24 24" sw={1.8}>
            <path d="M6 6A9 9 0 1 1 9 18M8 16L2 23M1 10H12M5 6L1 10L5 14" />
          </Glyph>
        </button>
        <button type="button" aria-label="Zoom vor">
          <Glyph w={24} h={24} box="0 0 24 24" sw={1.8} color="#b5b8ba">
            <path d="M18 6A9 9 0 1 0 15 18M16 16L22 23M12 10H23M19 6L23 10L19 14" />
          </Glyph>
        </button>
        <button type="button" aria-label="Vergrößern">
          <Glyph w={24} h={24} box="0 0 24 24" sw={1.8}>
            <circle cx="11" cy="10" r="9" />
            <path d="M17 17L23 23M7 10H15M11 6V14" />
          </Glyph>
        </button>
      </div>
      <Quick
        label="Zoom"
        pale
        icon={
          <Glyph w={24} h={24} box="0 0 24 24" sw={1.6}>
            <circle cx="11" cy="11" r="9.5" />
            <path d="M18 18L23 23M11 4V6M11 16V18M4 11H6M16 11H18M9 6L11 4L13 6M9 16L11 18L13 16M6 9L4 11L6 13M16 9L18 11L16 13" />
          </Glyph>
        }
      >
        keine Daten
      </Quick>
      <Quick
        label="Ausrichtung"
        icon={
          <Glyph w={22} h={20} box="0 0 22 20">
            <path d="M2 8L8 1L13 6L7 14ZM10 18Q17 17 16 9M12 12L16 8L20 12" />
          </Glyph>
        }
      >
        0,0000°
      </Quick>
      <Quick
        label="Maßstab"
        icon={
          <Glyph w={22} h={14} box="0 0 22 14" sw={1.8}>
            <path d="M1 1H21V12H1ZM5 12V8M9 12V8M13 12V8M17 12V8" />
          </Glyph>
        }
      >
        1:50
      </Quick>
      <Quick
        label="Ebenenkombination"
        left
        icon={
          <Glyph w={24} h={20} box="0 0 24 20">
            <path d="M8 1H23L16 8H1ZM3 10L1 13H16L23 6M3 15L1 18H16L23 11" />
          </Glyph>
        }
      >
        04 Beispiel Gr Genehmigungspl...
      </Quick>
      <Quick
        label="Teilstruktur"
        icon={
          <Glyph w={20} h={18} box="0 0 20 18">
            <path d="M1 1H19V17H1ZM1 6H19M2 16L6 8M7 16L11 8M12 16L16 8M4 5L6 2L9 5L12 2L15 5L17 2M5 8L8 13M11 8L14 13" />
          </Glyph>
        }
      >
        Komplettes Modell
      </Quick>
      <Quick
        label="Stiftset"
        icon={
          <Glyph w={20} h={20} box="0 0 20 20">
            <path d="M6 1V13L10 19L14 13V1M6 13H8L10 14L12 13H14" />
          </Glyph>
        }
      >
        02 S/W 1:100/200
      </Quick>
      <Quick
        label="Modelldarstellung"
        left
        open
        icon={
          <Glyph w={22} h={18} box="0 0 22 18">
            <path d="M1 1H21V17H1ZM6 5H16V13H6Z" />
          </Glyph>
        }
      >
        05 Beispiel Ausführung
      </Quick>
    </div>
  );
}

export default function App() {
  return (
    <div className="flex h-screen flex-col overflow-hidden bg-[#efefef] font-['Open_Sans',sans-serif] text-black">
      <TopBar />
      <InfoBox />
      <div className="flex min-h-0 grow">
        <Toolbox />
        <div className="flex min-w-0 grow flex-col">
          <Tabs />
          <main className="relative min-h-0 grow overflow-hidden bg-white">
            <Plan />
            <Tracker />
            <Grip className="top-px left-[1505px] rounded-b" />
            <Grip className="bottom-px left-[1505px] rounded-t" />
            <Grip tall className="top-[877px] left-[2px] rounded-r" />
          </main>
          <QuickBar />
        </div>
      </div>
      <div className="h-[26px] shrink-0 overflow-hidden border-t border-[#c8c8c8] px-[2px] pt-[7px] text-[17px] leading-6 whitespace-nowrap">
        Nächsten Eckpunkt der Treppen-Referenzlinie eingeben.
      </div>
    </div>
  );
}
